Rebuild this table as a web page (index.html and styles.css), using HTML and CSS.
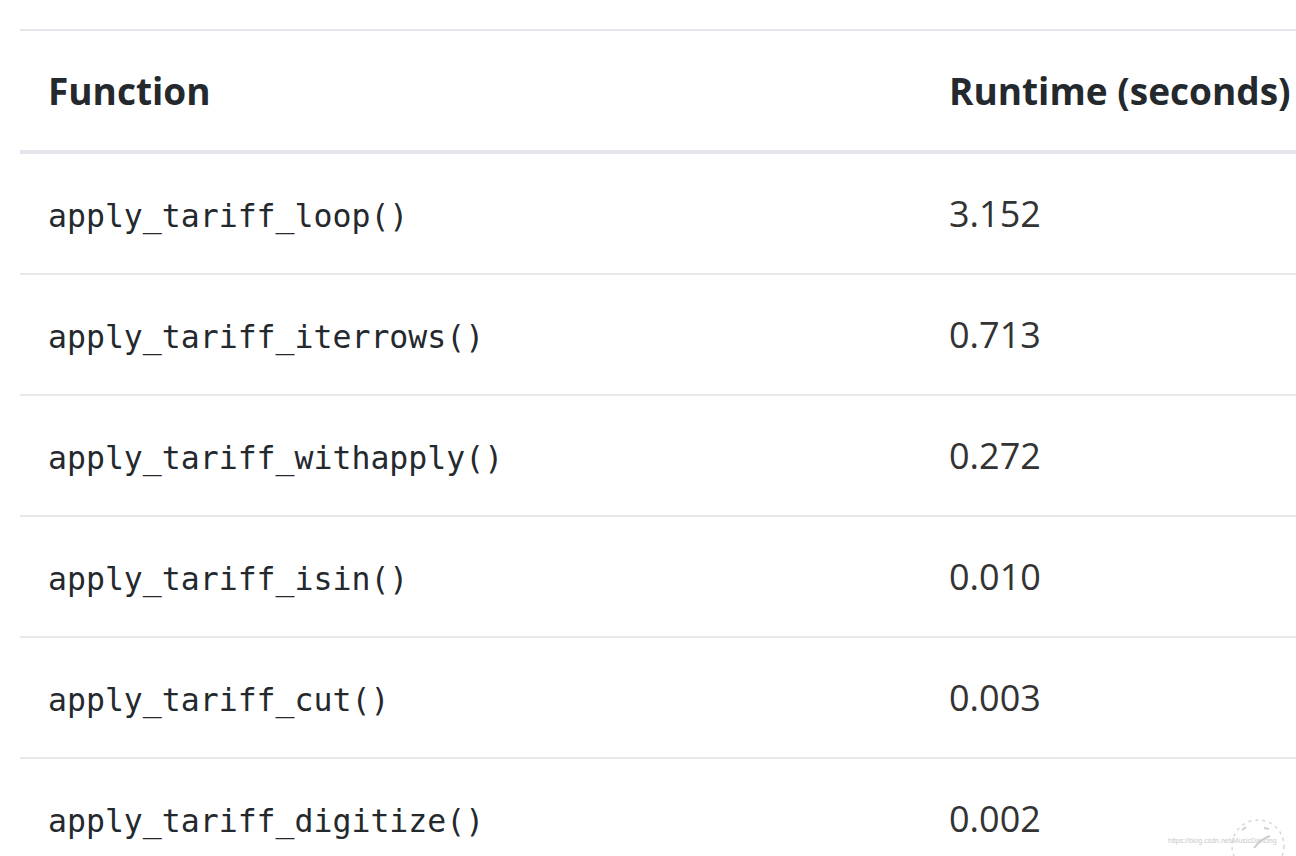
FILE: index.html
```html
<!DOCTYPE html>
<html>
<head>
<meta charset="utf-8">
<link rel="stylesheet" href="styles.css">
</head>
<body>
<div class="wrap">
  <table class="tbl">
    <thead>
      <tr><th class="c1">Function</th><th class="c2">Runtime (seconds)</th></tr>
    </thead>
    <tbody>
      <tr><td class="c1"><code>apply_tariff_loop()</code></td><td class="c2">3.152</td></tr>
      <tr><td class="c1"><code>apply_tariff_iterrows()</code></td><td class="c2">0.713</td></tr>
      <tr><td class="c1"><code>apply_tariff_withapply()</code></td><td class="c2">0.272</td></tr>
      <tr><td class="c1"><code>apply_tariff_isin()</code></td><td class="c2">0.010</td></tr>
      <tr><td class="c1"><code>apply_tariff_cut()</code></td><td class="c2">0.003</td></tr>
      <tr><td class="c1"><code>apply_tariff_digitize()</code></td><td class="c2">0.002</td></tr>
    </tbody>
  </table>
</div>
<div class="watermark">
  <svg class="wm-logo" width="60" height="40" viewBox="0 0 60 40">
    <circle cx="30" cy="28" r="26" fill="none" stroke="#d6d6d6" stroke-width="1.5" stroke-dasharray="3 4"/>
    <path d="M14 12 l4 -3 M36 10 l5 1" stroke="#cfcfcf" stroke-width="2"/>
    <path d="M26 30 q8 -10 16 -12" stroke="#cfcfcf" stroke-width="2" fill="none"/>
  </svg>
  <span class="wm-text">https://blog.csdn.net/MusicDancing</span>
</div>
</body>
</html>
```
FILE: styles.css
```css
html, body {
  margin: 0;
  padding: 0;
  background: #ffffff;
  overflow: hidden;
}
.wrap {
  padding: 29px 0 0 20px;
  width: 1330px;
}
.tbl {
  border-collapse: collapse;
  width: 1330px;
  table-layout: fixed;
  border-top: 2px solid #e3e6ea;
}
.tbl th, .tbl td {
  text-align: left;
  padding: 0 0 0 28px;
  white-space: nowrap;
}
.tbl .c1 { width: 873px; }
.tbl th {
  height: 119px;
  font-family: "Open Sans", "Noto Sans", sans-serif;
  font-weight: 700;
  font-size: 37px;
  color: #24292e;
  border-bottom: 4px solid #e3e6ea;
  letter-spacing: 0;
}
.tbl td {
  height: 119px;
  border-bottom: 2px solid #e6e8eb;
  font-family: "Open Sans", "Noto Sans", sans-serif;
  font-size: 36px;
  color: #333;
  letter-spacing: 0;
}
.tbl code {
  font-family: "DejaVu Sans Mono", "Liberation Mono", monospace;
  font-size: 31.5px;
  color: #24292e;
  letter-spacing: 0;
}
.watermark {
  position: absolute;
  left: 1168px;
  top: 816px;
  width: 128px;
  height: 40px;
}
.wm-logo {
  position: absolute;
  left: 60px;
  top: 2px;
}
.wm-text {
  position: absolute;
  left: 0;
  top: 21px;
  font-family: "Liberation Sans", sans-serif;
  font-size: 7px;
  color: #c8c8c8;
  white-space: nowrap;
}
```
